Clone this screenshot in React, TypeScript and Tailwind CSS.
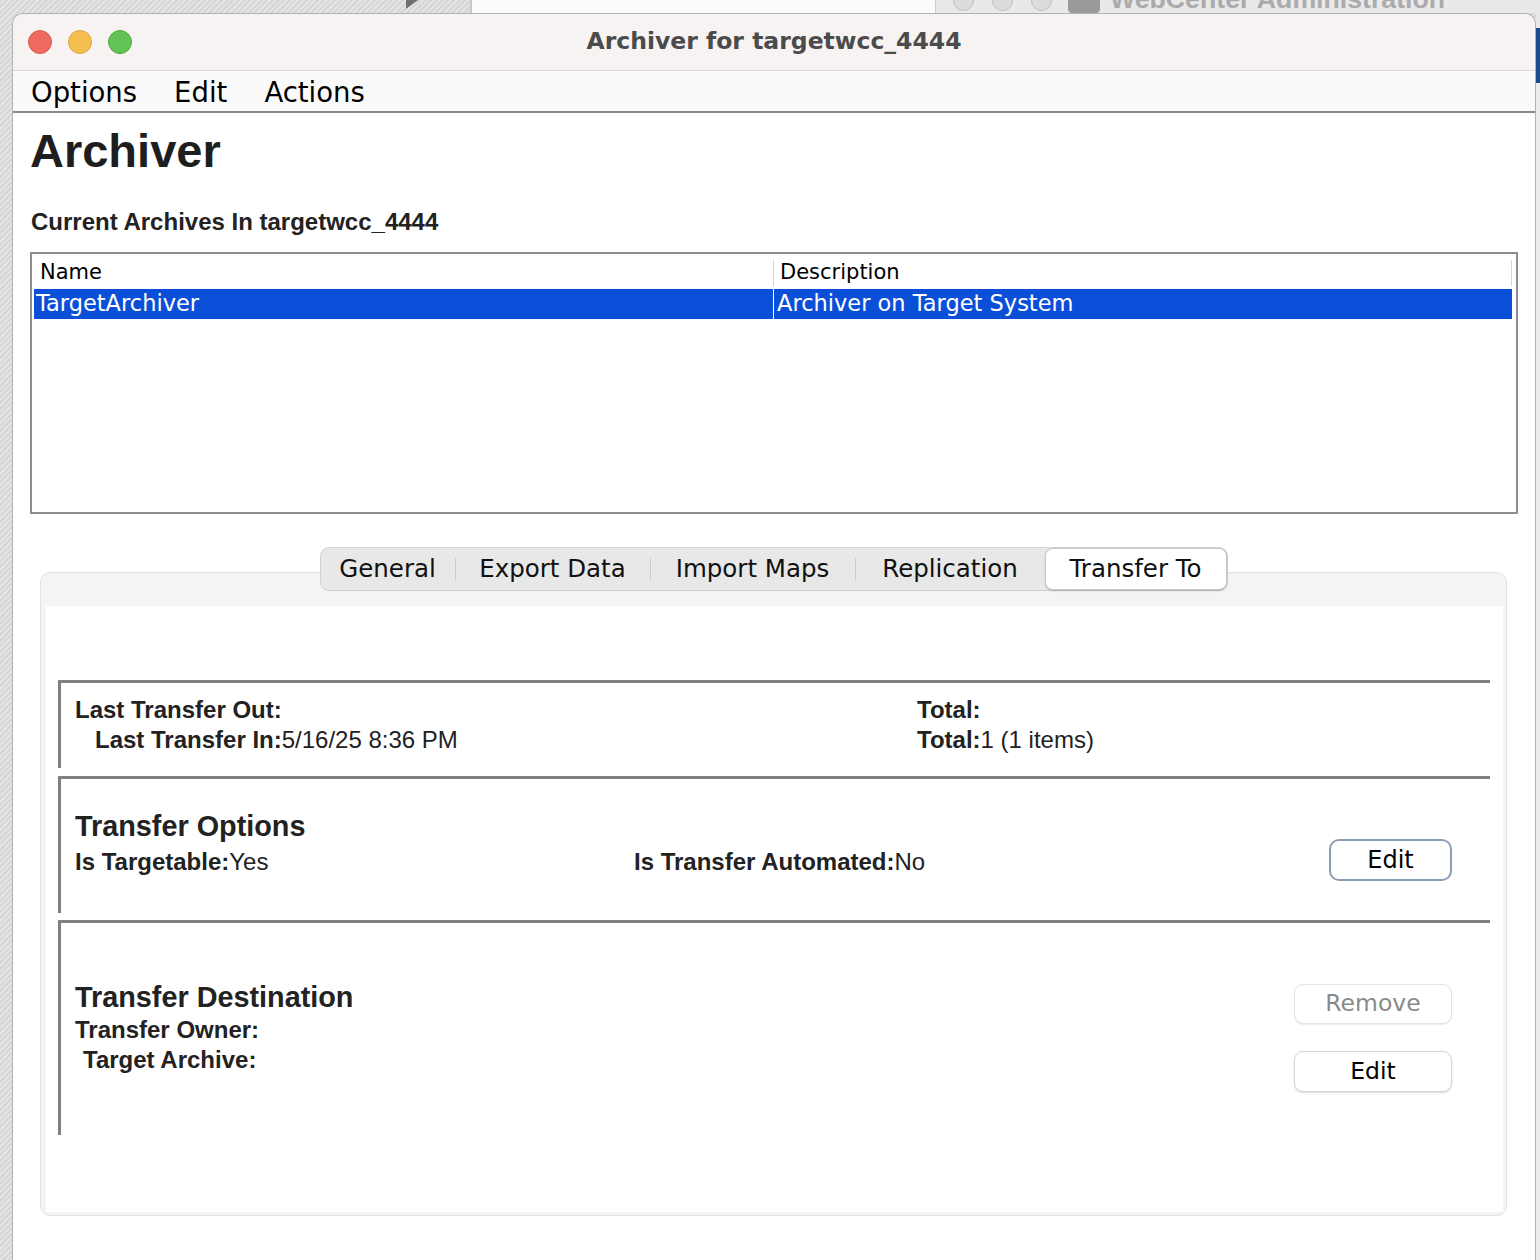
const dv = "font-['DejaVu_Sans',sans-serif]";
const lib = "font-['Liberation_Sans',Arial,sans-serif]";

export default function App() {
  return (
    <div className={`w-[1540px] h-[1260px] overflow-hidden flex flex-col bg-[repeating-linear-gradient(135deg,#d6d6d6_0px,#d6d6d6_2px,#e4e4e4_2px,#e4e4e4_4px)] ${dv}`}>
      <Backdrop />
      <div className="flex flex-1 min-h-0">
        <div className="w-[12px] shrink-0" />
        <Window />
        <div className="flex-1 flex flex-col">
          <div className="h-[15px] bg-[#e9e9e9]" />
          <div className="h-[55px] bg-[#1c4b8c]" />
          <div className="flex-1 bg-[#ececec]" />
        </div>
      </div>
    </div>
  );
}

function Backdrop() {
  return (
    <div className="h-[13px] shrink-0 flex items-end overflow-hidden">
      <div className="w-[470px] h-full flex items-start">
        <div className="ml-[406px] w-[12px] h-[9px] bg-[#6f6f6f] [clip-path:polygon(0_0,100%_0,0_100%)]" />
      </div>
      <div className="w-[2px] h-full bg-[#c8c8c8]" />
      <div className="w-[463px] h-full bg-[#fbfbfb]" />
      <div className="flex-1 h-full bg-[#e9e9e9] border-l border-[#cfcfcf] flex items-end gap-[18px] pl-[17px]">
        <div className="w-[21px] h-[21px] mb-[2px] shrink-0 rounded-full border border-[#bdbdbd] bg-[#dcdcdc]" />
        <div className="w-[21px] h-[21px] mb-[2px] shrink-0 rounded-full border border-[#bdbdbd] bg-[#dcdcdc]" />
        <div className="w-[21px] h-[21px] mb-[2px] shrink-0 rounded-full border border-[#bdbdbd] bg-[#dcdcdc]" />
        <div className="w-[32px] h-[24px] shrink-0 rounded-[4px] bg-[#9a9a9a] ml-[-2px]" />
        <div className={`shrink-0 -ml-[8px] text-[26.7px] leading-[26.7px] font-bold text-[#ababab] ${lib}`}>
          WebCenter Administration
        </div>
      </div>
    </div>
  );
}

function Window() {
  return (
    <div className="w-[1524px] shrink-0 flex flex-col bg-white rounded-t-[11px] border-x border-t border-[#b2b2b2] overflow-hidden">
      {/* Title bar */}
      <div className="h-[57px] shrink-0 bg-[#f6f3f2] border-b border-[#d9d9d9] grid grid-cols-[1fr_auto_1fr] items-center">
        <div className="flex items-center gap-4 pl-[15px]">
          <div className="w-[24px] h-[24px] rounded-full bg-[#ee6a5f] border border-[#d85b50]" />
          <div className="w-[24px] h-[24px] rounded-full bg-[#f5bf4f] border border-[#d9a440]" />
          <div className="w-[24px] h-[24px] rounded-full bg-[#61c454] border border-[#4ea842]" />
        </div>
        <div className="text-[23.5px] font-bold text-[#4b4b4b]">Archiver for targetwcc_4444</div>
        <div />
      </div>

      {/* Menu bar */}
      <div className="h-[42px] shrink-0 bg-[#fafafa] border-b-2 border-[#8a8a8a] flex items-center gap-[37px] pl-[18px] pt-[3px] text-[27.5px] text-black">
        <span>Options</span>
        <span>Edit</span>
        <span>Actions</span>
      </div>

      {/* Content */}
      <div className="flex-1 flex flex-col bg-white">
        <h1 className={`ml-[17px] mt-[9px] h-[58px] leading-[58px] text-[47px] font-bold text-[#1e1e1e] ${lib}`}>Archiver</h1>
        <p className={`ml-[18px] mt-[27px] h-[30px] leading-[30px] text-[24px] font-bold text-[#222] ${lib}`}>
          Current Archives In targetwcc_4444
        </p>

        <ArchiveTable />

        <div className="mt-[33px] ml-[27px] w-[1467px] flex flex-col items-center">
          <Tabs />
          <div className="-mt-[19px] w-full h-[644px] rounded-[10px] border border-[#e2e2e2] bg-[#f4f4f4] pt-[33px] pl-[5px] pr-[3px] pb-[3px]">
            <div className="h-full bg-white pt-[74px] pl-[12px] pr-[13px]">
              <TransferSections />
            </div>
          </div>
        </div>
      </div>
    </div>
  );
}

function ArchiveTable() {
  return (
    <div className="mt-[15px] ml-[17px] w-[1488px] h-[262px] border-2 border-[#8e8e8e] p-[2px] pr-[4px]">
      <div className="h-[33px] flex items-center text-[21px] text-black">
        <div className="w-[739px] pl-[6px]">Name</div>
        <div className="w-px h-[26px] bg-[#d6d6d6]" />
        <div className="flex-1 pl-[6px]">Description</div>
        <div className="w-px h-[26px] bg-[#d6d6d6]" />
      </div>
      <div className="h-[30px] flex items-center bg-[#0b4fd9] text-white text-[22.5px]">
        <div className="w-[739px] pl-[2px]">TargetArchiver</div>
        <div className="w-px h-full bg-white" />
        <div className="flex-1 pl-[3px]">Archiver on Target System</div>
      </div>
    </div>
  );
}

const tabs = [
  { label: 'General', w: 'w-[134px]' },
  { label: 'Export Data', w: 'w-[194px]' },
  { label: 'Import Maps', w: 'w-[204px]' },
  { label: 'Replication', w: 'w-[189px]' },
];

function Tabs() {
  return (
    <div className="relative z-10 h-[44px] flex items-center rounded-[9px] border border-[#d2d2d2] bg-[#e8e8e8] text-[24.5px] text-[#111]">
      {tabs.map((t, i) => (
        <div key={t.label} className="flex items-center">
          {i > 0 && i < 4 && <div className="w-px h-[22px] bg-[#cdcdcd]" />}
          <div className={`${t.w} text-center`}>{t.label}</div>
        </div>
      ))}
      <div className="w-[182px] h-[42px] flex items-center justify-center rounded-[8px] border border-[#c8c8c8] bg-white shadow-[0_1px_2px_rgba(0,0,0,0.18)]">
        Transfer To
      </div>
    </div>
  );
}

function Field({ label, value }: { label: string; value?: string }) {
  return (
    <span>
      <span className="font-bold">{label}</span>
      {value && <span className="font-normal">{value}</span>}
    </span>
  );
}

function TransferSections() {
  return (
    <div className={`flex flex-col text-[24px] text-[#222] ${lib}`}>
      {/* Last transfer */}
      <div className="h-[88px] border-t-[3px] border-l-[3px] border-[#808080] pl-[14px] pt-[12px]">
        <div className="h-[30px] leading-[30px] flex">
          <div className="w-[842px]"><Field label="Last Transfer Out:" /></div>
          <Field label="Total:" />
        </div>
        <div className="h-[30px] leading-[30px] flex">
          <div className="w-[842px] pl-[20px]"><Field label="Last Transfer In:" value="5/16/25 8:36 PM" /></div>
          <Field label="Total:" value="1 (1 items)" />
        </div>
      </div>

      {/* Transfer options */}
      <div className="mt-[8px] h-[137px] border-t-[3px] border-l-[3px] border-[#808080] pl-[14px] pt-[32px]">
        <div className="h-[30px] leading-[30px] text-[28.8px] font-bold">Transfer Options</div>
        <div className="h-[42px] flex items-center">
          <div className="w-[559px]"><Field label="Is Targetable:" value="Yes" /></div>
          <div className="flex-1"><Field label="Is Transfer Automated:" value="No" /></div>
          <button className={`w-[123px] h-[42px] mr-[38px] -mt-[4px] rounded-[10px] border-2 border-[#8c9eb6] bg-white text-[24px] text-black ${dv}`}>
            Edit
          </button>
        </div>
      </div>

      {/* Transfer destination */}
      <div className="mt-[7px] h-[215px] border-t-[3px] border-l-[3px] border-[#808080] pl-[14px] flex">
        <div className="flex-1 pt-[59px]">
          <div className="h-[30px] leading-[30px] text-[28.8px] font-bold">Transfer Destination</div>
          <div className="mt-[3px] h-[30px] leading-[30px]"><Field label="Transfer Owner:" /></div>
          <div className="h-[30px] leading-[30px] pl-[8px]"><Field label="Target Archive:" /></div>
        </div>
        <div className={`pt-[61px] mr-[38px] flex flex-col gap-[27px] ${dv}`}>
          <button className="w-[158px] h-[40px] rounded-[9px] border border-[#e3e3e3] bg-white text-[23.5px] text-[#8a8a8a] shadow-[0_1px_1px_rgba(0,0,0,0.08)]">
            Remove
          </button>
          <button className="w-[158px] h-[41px] rounded-[9px] border border-[#d6d6d6] bg-white text-[23.5px] text-black shadow-[0_1px_2px_rgba(0,0,0,0.15)]">
            Edit
          </button>
        </div>
      </div>
    </div>
  );
}
